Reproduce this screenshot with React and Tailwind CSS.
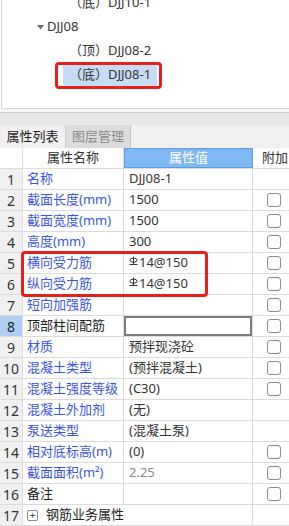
import React from "react";

const FONT = { fontFamily: '"Noto Sans", "Noto Sans CJK SC", sans-serif' };

const ROWS = [
  { no: 1, name: "名称", value: "DJJ08-1", check: false },
  { no: 2, name: "截面长度(mm)", value: "1500", check: true },
  { no: 3, name: "截面宽度(mm)", value: "1500", check: true },
  { no: 4, name: "高度(mm)", value: "300", check: true },
  { no: 5, name: "横向受力筋", value: "14@150", rebar: true, check: true },
  { no: 6, name: "纵向受力筋", value: "14@150", rebar: true, check: true },
  { no: 7, name: "短向加强筋", value: "", check: true },
  { no: 8, name: "顶部柱间配筋", value: "", check: true, black: true, editing: true },
  { no: 9, name: "材质", value: "预拌现浇砼", check: true },
  { no: 10, name: "混凝土类型", value: "(预拌混凝土)", check: true },
  { no: 11, name: "混凝土强度等级", value: "(C30)", check: true },
  { no: 12, name: "混凝土外加剂", value: "(无)", check: false },
  { no: 13, name: "泵送类型", value: "(混凝土泵)", check: false },
  { no: 14, name: "相对底标高(m)", value: "(0)", check: true },
  { no: 15, name: "截面面积(m²)", value: "2.25", grey: true, check: true },
  { no: 16, name: "备注", value: "", check: true, black: true },
];

const RebarSymbol = () => (
  <svg width="9" height="10" viewBox="0 0 9 10" className="mr-[1px] -mt-[4px]">
    <ellipse cx="4.5" cy="4.2" rx="3.6" ry="2.1" fill="none" stroke="#333" strokeWidth="1" />
    <line x1="4.5" y1="0.5" x2="4.5" y2="8.5" stroke="#333" strokeWidth="1" />
    <line x1="0.5" y1="8.5" x2="8.5" y2="8.5" stroke="#333" strokeWidth="1" />
  </svg>
);

const CheckBox = () => (
  <div className="w-[14px] h-[14px] rounded-[3px] border border-[#8c8c8c] bg-white" />
);

const Row = ({ row }) => (
  <div className="flex h-[21px] border-b border-[#dcdcdc]">
    <div
      className={
        row.editing
          ? "w-[23px] shrink-0 flex items-center justify-center bg-[#afd0f5] border-r border-[#dcdcdc] text-[14px] text-[#222]"
          : "w-[23px] shrink-0 flex items-center justify-center bg-[#f0f0f0] border-r border-[#dcdcdc] text-[14px] text-[#333]"
      }
    >
      {row.no}
    </div>
    <div
      className={
        row.black
          ? "w-[101px] shrink-0 flex items-center pl-[4px] border-r border-[#dcdcdc] text-[13px] text-[#222] whitespace-nowrap overflow-hidden"
          : "w-[101px] shrink-0 flex items-center pl-[4px] border-r border-[#dcdcdc] text-[13px] text-[#3a55e6] whitespace-nowrap overflow-hidden"
      }
    >
      {row.name}
    </div>
    <div className="w-[129px] shrink-0 border-r border-[#dcdcdc] flex">
      {row.editing ? (
        <div className="flex-1 border-2 border-[#7d7d7d] bg-white" />
      ) : (
        <div
          className={
            row.grey
              ? "flex-1 flex items-center pl-[5px] text-[13px] text-[#8a8a8a] whitespace-nowrap"
              : "flex-1 flex items-center pl-[5px] text-[13px] text-[#333] whitespace-nowrap"
          }
        >
          {row.rebar && <RebarSymbol />}
          {row.value}
        </div>
      )}
    </div>
    <div className="flex-1 flex items-center pl-[14px]">{row.check && <CheckBox />}</div>
  </div>
);

export default function App() {
  return (
    <div className="w-[289px] h-[526px] overflow-hidden bg-white" style={FONT}>
      {/* tree panel */}
      <div className="relative h-[109px] ml-[1px] border-l border-b border-[#d6d6d6] overflow-hidden text-[13px] text-[#333]">
        <div className="flex flex-col -mt-[9px]">
          <div className="h-[24px] flex items-center pl-[67px] whitespace-nowrap">（底）DJJ10-1</div>
          <div className="h-[24px] flex items-center pl-[35px] whitespace-nowrap">
            <svg width="7" height="5" viewBox="0 0 7 5" className="mr-[3px]">
              <polygon points="0,0 7,0 3.5,4.5" fill="#6b6b6b" />
            </svg>
            DJJ08
          </div>
          <div className="h-[24px] flex items-center pl-[67px] whitespace-nowrap">（顶）DJJ08-2</div>
          <div className="h-[24px] flex items-center pl-[61px] whitespace-nowrap">
            <span className="h-[21px] flex items-center px-[6px] bg-[#c5dcf4] rounded-[2px]">（底）DJJ08-1</span>
          </div>
        </div>
        <div className="absolute left-[53px] top-[62px] w-[107px] h-[27px] border-[3px] border-[#e8201a] rounded-[4px]" />
      </div>

      {/* separator */}
      <div className="h-[4px] bg-[#f7f7f7] border-b border-[#d0d0d0]" />
      <div className="h-[12px] bg-[#e8e8e8]" />

      {/* tabs */}
      <div className="flex h-[23px] bg-[#f0f0f0] text-[13px]">
        <div className="w-[66px] flex items-center justify-center text-[#222] border-r border-[#d0d0d0]">属性列表</div>
        <div className="w-[65px] flex items-center justify-center text-[#8c8c8c] bg-[#dcdcdc] border-r border-[#c8c8c8]">图层管理</div>
      </div>

      {/* table */}
      <div className="relative">
        <div className="flex h-[21px] border-b border-[#dcdcdc] text-[13px]">
          <div className="w-[23px] shrink-0 border-r border-[#dcdcdc] bg-white" />
          <div className="w-[101px] shrink-0 flex items-center justify-center border-r border-[#dcdcdc] text-[#333]">属性名称</div>
          <div className="w-[129px] shrink-0 flex items-center justify-center bg-[#7fb8f5] border border-[#5d9de2] text-white">属性值</div>
          <div className="flex-1 flex items-center pl-[9px] text-[#333] whitespace-nowrap">附加</div>
        </div>
        {ROWS.map((row) => (
          <Row key={row.no} row={row} />
        ))}
        <div className="flex h-[21px] border-b border-[#dcdcdc]">
          <div className="w-[23px] shrink-0 flex items-center justify-center bg-[#f0f0f0] border-r border-[#dcdcdc] text-[14px] text-[#333]">17</div>
          <div className="w-[230px] shrink-0 flex items-center pl-[4px] border-r border-[#dcdcdc] text-[13px] text-[#222] whitespace-nowrap">
            <span className="w-[11px] h-[11px] mr-[8px] rounded-[2px] border border-[#888] flex items-center justify-center text-[10px] leading-none text-[#444]">+</span>
            钢筋业务属性
          </div>
          <div className="flex-1" />
        </div>
        <div className="absolute left-[21px] top-[103px] w-[187px] h-[46px] border-[3px] border-[#e8201a] rounded-[4px]" />
      </div>
    </div>
  );
}
